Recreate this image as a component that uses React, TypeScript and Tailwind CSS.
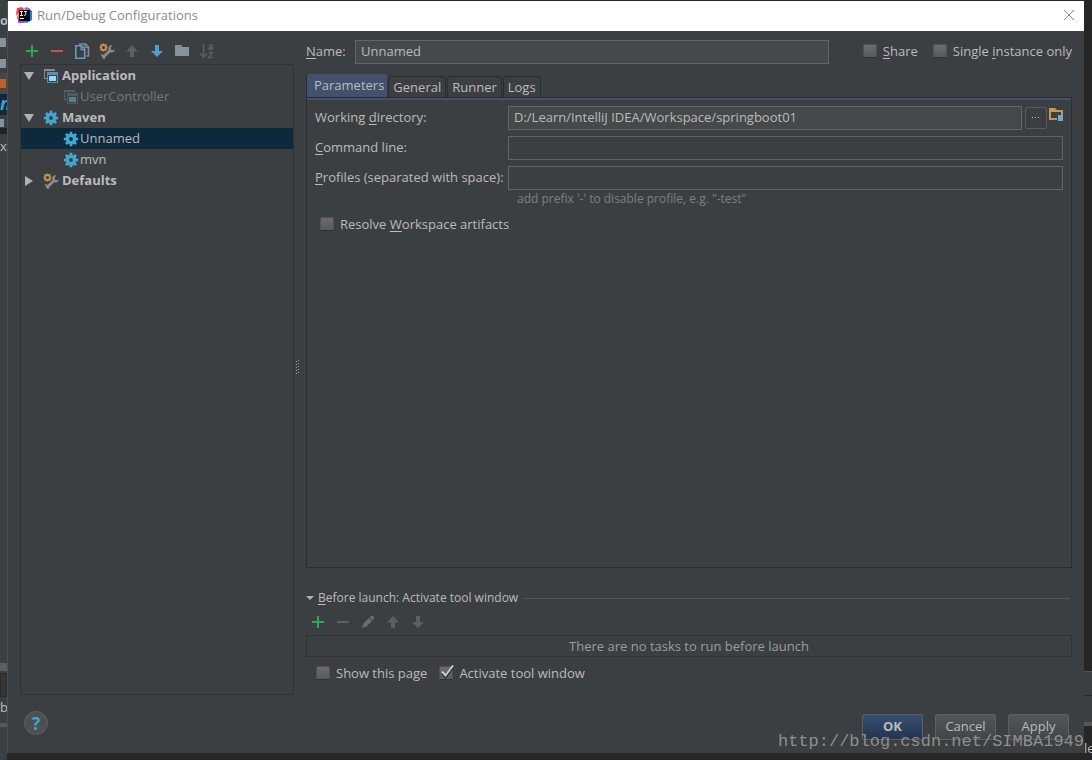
import React from 'react';

interface IconProps {
  className?: string;
}

const IdeaLogo = () => (
  <svg viewBox="0 0 16 16" className="w-4 h-4 shrink-0" aria-hidden="true">
    <path d="M1 1 L6 0 L9 3 L3 9 L0 7Z" fill="#fc3c5e" />
    <path d="M0 7 L4 6 L4 12 L1 11Z" fill="#f5a04a" />
    <path d="M1 10 L5 11 L10 16 L2 16 L2 13Z" fill="#c33bd4" />
    <path d="M9 1 L13 1 L16 4 L16 13 L11 16 L7 14 L12 8Z" fill="#1b7ff2" />
    <path d="M8 1 L11 0 L14 3 L12 6Z" fill="#8f6fe0" />
    <rect x="3" y="3" width="11" height="11" fill="#050505" />
    <path d="M4 4.5h3M5.5 4.5v4M4 8.5h3M8 4.5h3M9.8 4.5v2.8q0 1.2-1.9 1.1" stroke="#e8e8e8" strokeWidth="1" fill="none" />
    <rect x="4" y="11" width="4" height="1" fill="#fff" />
  </svg>
);

const PlusIcon = () => (
  <svg viewBox="0 0 16 16" className="w-4 h-4" aria-hidden="true">
    <path d="M7 2h2v5h5v2H9v5H7V9H2V7h5z" fill="#2fa84f" />
  </svg>
);

const MinusIcon = ({ className }: IconProps) => (
  <svg viewBox="0 0 16 16" className={`w-4 h-4 ${className}`} aria-hidden="true">
    <path d="M2 7h12v2H2z" fill="currentColor" />
  </svg>
);

const CopyIcon = () => (
  <svg viewBox="0 0 16 16" className="w-4 h-4" fill="none" aria-hidden="true">
    <path d="M5 1h6.500l3 3v9h-2" stroke="#8b8b8b" strokeWidth="1.6" />
    <path d="M11 1v3.500h3.500" stroke="#8b8b8b" strokeWidth="1.2" />
    <path d="M1.800 2.800h5.900l3 3v9.400H1.800z" stroke="#5f9dc4" strokeWidth="1.6" />
    <path d="M7.200 3v3.500h3.500" stroke="#5f9dc4" strokeWidth="1.4" />
  </svg>
);

const WrenchIcon = () => (
  <svg viewBox="0 0 16 16" className="w-4 h-4" fill="none" aria-hidden="true">
    <path d="M4 14.500l6.500-6.500" stroke="#8b8b8b" strokeWidth="3" />
    <path d="M13.500 2Q9.500 2 9.200 5.500T12.200 9.500 15.800 5.800L14 7.300 12 6.800 11.600 4.700z" fill="#8b8b8b" />
    <path d="M1.500 11.200l3 .3 1.800 4.200-2 .3z" fill="#8b8b8b" />
    <circle cx="4.500" cy="4.500" r="2.500" stroke="#c98f45" strokeWidth="1.800" />
    <path d="M4.500 .5V2M4.500 7v1.500M.5 4.500H2M7 4.500h1.500M1.500 1.500l1 1M6.500 6.500l1 1M1.500 7.500l1-1M6.500 2.500l1-1" stroke="#c98f45" strokeWidth="1.500" />
  </svg>
);

const ArrowUpIcon = () => (
  <svg viewBox="0 0 16 16" className="w-4 h-4 text-[#5c5e5f]" aria-hidden="true">
    <path d="M8 2l6 6.5h-4V14H6V8.5H2z" fill="currentColor" />
  </svg>
);

const ArrowDownIcon = ({ className }: IconProps) => (
  <svg viewBox="0 0 16 16" className={`w-4 h-4 ${className}`} aria-hidden="true">
    <path d="M8 14L2 8h4V2h4v6h4z" fill="currentColor" />
  </svg>
);

const FolderIcon = () => (
  <svg viewBox="0 0 16 16" className="w-4 h-4" aria-hidden="true">
    <path d="M1 2h6l1.5 2H15v9H1z" fill="#87939a" />
  </svg>
);

const SortIcon = () => (
  <svg viewBox="0 0 16 16" className="w-4 h-4" fill="none" stroke="#5c5e5f" aria-hidden="true">
    <path d="M4.500 1v13M1 10.500l3.500 3.500 3.500-3.500" strokeWidth="1.500" />
    <path d="M10 2.500q2-1.200 3.400.1v4M13.300 4.300h-2q-1.600.3-1.300 1.500.6 1 3.300-.3M9.800 9.500h3.700l-3.700 5h4" strokeWidth="1.500" />
  </svg>
);

const PencilIcon = () => (
  <svg viewBox="0 0 16 16" className="w-4 h-4" aria-hidden="true">
    <path d="M2 14l1.500-4.500L9 4l3 3-5.500 5.500zM9.500 3.500l2-1.700q1-.4 2 .6t.5 2l-1.500 2z" fill="#6a6c6d" />
  </svg>
);

const AppIcon = ({ className = '' }: IconProps) => (
  <svg viewBox="0 0 16 16" className={`w-4 h-4 shrink-0 ${className}`} aria-hidden="true">
    <path d="M1 1h11v2H2v8H1z" fill="#8b8b8b" />
    <path d="M2 10h2v1H2z" fill="#8b8b8b" />
    <path d="M4 4h11v11H4zM5 7v7h9V7z" fill="#4f93b8" fillRule="evenodd" />
    <rect x="6" y="8" width="7" height="5" fill="#9bd7f5" />
  </svg>
);

const toothAngles = [0, 45, 90, 135];

const GearIcon = () => (
  <svg viewBox="0 0 16 16" className="w-4 h-4 shrink-0" fill="none" stroke="#3fa7d0" aria-hidden="true">
    <circle cx="8" cy="8" r="3.700" strokeWidth="3.600" />
    {toothAngles.map((angle) => (
      <path key={angle} d="M8 .8v3M8 12.200v3" strokeWidth="2.600" transform={`rotate(${angle} 8 8)`} />
    ))}
  </svg>
);

const ModuleFolderIcon = () => (
  <svg viewBox="0 0 16 16" className="w-4 h-4" aria-hidden="true">
    <path d="M1 2h6l2 2h6v6h-2V6H3v6h6v2H1z" fill="#c4965a" />
    <rect x="10" y="9" width="5" height="6" fill="#6ba9d0" />
  </svg>
);

interface CheckOptionProps {
  id: string;
  checked?: boolean;
  children: React.ReactNode;
}

const CheckOption = ({ id, checked = false, children }: CheckOptionProps) => (
  <div className="flex items-center gap-1.5 whitespace-nowrap">
    <span className="relative flex">
      <input
        id={id}
        type="checkbox"
        defaultChecked={checked}
        className="peer appearance-none w-[14px] h-[14px] rounded-xs bg-linear-to-b from-[#6c6c6c] to-[#5a5a5a] border border-[#4f5152] border-b-[#303132]"
      />
      <svg viewBox="0 0 16 16" className="hidden peer-checked:block absolute -top-0.5 left-0 w-4 h-4 pointer-events-none" fill="none" aria-hidden="true">
        <path d="M3 8.500l3.500 4L14 2.500" stroke="#2c2c2c" strokeWidth="3" />
        <path d="M3 7.500l3.500 4L14 1.500" stroke="#cfcfcf" strokeWidth="2" />
      </svg>
    </span>
    <label htmlFor={id}>{children}</label>
  </div>
);

const Key = ({ children }: { children: string }) => (
  <span className="underline underline-offset-2">{children}</span>
);

const toolButton = 'w-[25px] h-6 flex items-center justify-center';
const field = 'h-6 min-w-0 border border-[#646464] px-[5px] pb-0.5 outline-none';

const ConfigTree = () => (
  <ul className="flex-1 border border-[#323232]">
    <li>
      <TreeRow icon={<AppIcon />} label="Application" arrow="open" />
      <ul>
        <TreeRow icon={<AppIcon className="opacity-40" />} label="UserController" muted />
      </ul>
    </li>
    <li>
      <TreeRow icon={<GearIcon />} label="Maven" arrow="open" />
      <ul>
        <TreeRow icon={<GearIcon />} label="Unnamed" selected />
        <TreeRow icon={<GearIcon />} label="mvn" />
      </ul>
    </li>
    <li>
      <TreeRow icon={<WrenchIcon />} label="Defaults" arrow="closed" />
    </li>
  </ul>
);

interface TreeRowProps {
  icon: React.ReactNode;
  label: string;
  arrow?: 'open' | 'closed';
  muted?: boolean;
  selected?: boolean;
}

const TreeRow = ({ icon, label, arrow, muted, selected }: TreeRowProps) => {
  if (!arrow) {
    return (
      <li className={`h-[21px] flex items-center pl-[42px] ${selected ? 'bg-[#0d293e]' : ''} ${muted ? 'text-[#777777]' : ''}`}>
        {icon}
        <span className="pl-px pb-0.5">{label}</span>
      </li>
    );
  }
  return (
    <div className="h-[21px] flex items-center pl-[3px] font-bold">
      <svg viewBox="0 0 10 10" className="w-2.5 h-2.5 mr-[9px] shrink-0" fill="#afb1b3" aria-hidden="true">
        {arrow === 'open' ? <path d="M0 1h10L5 9z" /> : <path d="M1 0l8 5-8 5z" />}
      </svg>
      {icon}
      <span className="pl-[3px] pb-0.5">{label}</span>
    </div>
  );
};

const tabs = ['General', 'Runner', 'Logs'];

const ParametersPanel = () => (
  <section className="flex-1 flex flex-col">
    <div role="tablist" className="flex items-end gap-px">
      <button role="tab" aria-selected="true" className="h-[23px] pl-[7px] pr-[3px] pb-0.5 rounded-t-xs border-l border-[#2c2e2f] bg-[#43516e]">
        Parameters
      </button>
      {tabs.map((tab) => (
        <button key={tab} role="tab" aria-selected="false" className="h-[21px] px-1 rounded-t-sm border border-b-0 border-[#2a2c2d]">
          {tab}
        </button>
      ))}
    </div>
    <div className="flex-1 border border-[#2a2c2d]">
      <div className="h-0.5 bg-[#43516e]" />
      <div className="px-2 pt-1.5">
        <div className="grid grid-cols-[193px_1fr] gap-y-1.5 items-center">
          <label htmlFor="workdir" className="pb-0.5">Working <Key>d</Key>irectory:</label>
          <div className="flex">
            <input id="workdir" defaultValue="D:/Learn/IntelliJ IDEA/Workspace/springboot01" className={`${field} flex-1 bg-[#45494a]`} />
            <button aria-label="Browse" className="ml-[3px] mt-px w-[22px] h-[22px] rounded-xs border border-[#5a5d5e] flex items-center justify-center">
              <svg viewBox="0 0 8 2" className="w-2 h-0.5" fill="#bbbbbb" aria-hidden="true">
                <path d="M0 0h1v1H0zM3 0h1v1H3zM6 0h1v1H6z" />
              </svg>
            </button>
            <button aria-label="Select module" className="self-start ml-px w-[15px]">
              <ModuleFolderIcon />
            </button>
          </div>
          <label htmlFor="cmdline" className="pb-0.5"><Key>C</Key>ommand line:</label>
          <input id="cmdline" className={field} />
          <label htmlFor="profiles" className="pb-0.5 whitespace-nowrap"><Key>P</Key>rofiles (separated with space):</label>
          <input id="profiles" className={field} />
        </div>
        <p className="pl-[202px] text-[12px] leading-[18px] text-[#7d7f80]">add prefix '-' to disable profile, e.g. "-test"</p>
        <div className="pt-1.5 pl-[5px]">
          <CheckOption id="resolve">Resolve <Key>W</Key>orkspace artifacts</CheckOption>
        </div>
      </div>
    </div>
  </section>
);

const BeforeLaunch = () => (
  <section className="pt-5">
    <h2 className="h-5 flex items-center text-[12px]">
      <svg viewBox="0 0 8 6" className="w-2 h-1.5 mr-1" fill="#afb1b3" aria-hidden="true">
        <path d="M0 1h8L4 5z" />
      </svg>
      <span><Key>B</Key>efore launch: Activate tool window</span>
      <span className="flex-1 h-px ml-1.5 mr-0.5 bg-[#515558]" />
    </h2>
    <div className="flex pt-0.5 pb-px -ml-px">
      <button aria-label="Add task" className={toolButton}><PlusIcon /></button>
      <button aria-label="Remove task" className={toolButton}><MinusIcon className="text-[#5c5e5f]" /></button>
      <button aria-label="Edit task" className={toolButton}><PencilIcon /></button>
      <button aria-label="Move task up" className={toolButton}><ArrowUpIcon /></button>
      <button aria-label="Move task down" className={toolButton}><ArrowDownIcon className="text-[#5c5e5f]" /></button>
    </div>
    <p className="h-[22px] border border-[#323232] flex items-center justify-center text-[#9a9c9d]">
      There are no tasks to run before launch
    </p>
    <div className="flex gap-3 pt-1.5 pb-px pl-2.5">
      <CheckOption id="showpage">Show this page</CheckOption>
      <CheckOption id="activate" checked>Activate tool window</CheckOption>
    </div>
  </section>
);

// Slivers of the editor window that show around the dialog
const LeftEdge = () => (
  <div className="w-[7px] shrink-0 overflow-hidden flex flex-col whitespace-nowrap" aria-hidden="true">
    <span className="h-[38px] pt-3 font-bold leading-4">or</span>
    <span className="h-[9px] w-1.5 bg-[#87939a]" />
    <span className="h-[9px] w-1.5 mt-3 bg-[#87939a]" />
    <span className="h-[21px] mt-[5px] py-1.5 bg-[#49473f]"><span className="block h-[9px] w-1.5 bg-[#c2602c]" /></span>
    <span className="h-[21px] bg-[#0d293e] text-[#3fa7d0] text-[18px] leading-[18px] font-bold italic">n</span>
    <span className="h-2 w-1 mt-1 bg-[#87939a]" />
    <span className="h-1.5 mt-px bg-[#222222]" />
    <span className="leading-5 mt-0.5">xt</span>
    <span className="h-2 mt-auto bg-[#5b5d5e]" />
    <span className="h-6 mt-0.5 border border-[#2a2a2a] bg-[#353638]" />
    <span className="h-[26px] leading-5">bu</span>
    <span className="h-1 bg-[#55585a]" />
    <span className="h-[33px]" />
  </div>
);

const RightEdge = () => (
  <div className="w-2 shrink-0 overflow-hidden flex flex-col justify-end bg-[#262626]" aria-hidden="true">
    <span className="h-6 border-t border-[#515558] bg-[#3c3f41]" />
    <span className="h-[27px] border-t border-[#2a2a2a] bg-[#3c3f41]" />
    <span className="h-1 bg-[#55585a]" />
    <span className="h-[34px] pt-3.5 leading-4 text-[#bbbbbb]">le</span>
  </div>
);

const footerButton = 'w-[61px] h-[26px] pb-0.5 rounded-xs border border-[#5c6062]';

export default function App() {
  return (
    <div className="relative min-h-screen flex bg-[#3c3f41] text-[#bbbbbb] text-[13px] leading-5 font-['Open_Sans',sans-serif]">
      <LeftEdge />
      <div className="flex-1 min-w-0 flex flex-col bg-[#262626]">
        <main className="flex-1 flex flex-col mt-px mb-[7px] border-l border-[#4c4f51] bg-[#3c3f41]">
          <header className="h-[30px] shrink-0 flex items-center pl-2 pr-[9px] pb-0.5 bg-white text-[#8c8c8c]">
            <IdeaLogo />
            <h1 className="flex-1 pl-[5px]">Run/Debug Configurations</h1>
            <button aria-label="Close">
              <svg viewBox="0 0 12 12" className="w-3 h-3" stroke="#8c8c8c" fill="none" aria-hidden="true">
                <path d="M1 1l10 10M11 1L1 11" />
              </svg>
            </button>
          </header>

          <div className="flex-1 flex pl-3 pr-3">
            <div className="w-[274px] shrink-0 flex flex-col pt-2">
              <div className="flex pb-px -ml-px">
                <button aria-label="Add" className={toolButton}><PlusIcon /></button>
                <button aria-label="Remove" className={toolButton}><MinusIcon className="text-[#c75450]" /></button>
                <button aria-label="Copy" className={toolButton}><CopyIcon /></button>
                <button aria-label="Edit defaults" className={toolButton}><WrenchIcon /></button>
                <button aria-label="Move up" className={toolButton}><ArrowUpIcon /></button>
                <button aria-label="Move down" className={toolButton}><ArrowDownIcon className="text-[#4a9fcb]" /></button>
                <button aria-label="New folder" className={toolButton}><FolderIcon /></button>
                <button aria-label="Sort" className={toolButton}><SortIcon /></button>
              </div>
              <ConfigTree />
            </div>

            <div className="w-3 shrink-0 flex items-center pl-0.5 pt-2">
              <svg viewBox="0 0 4 14" className="w-1 h-3.5" fill="#9a9c9d" aria-hidden="true">
                <path d="M0 1h1v1H0zM0 4h1v1H0zM0 7h1v1H0zM0 10h1v1H0zM0 13h1v1H0zM2 0h1v1H2zM2 3h1v1H2zM2 6h1v1H2zM2 9h1v1H2zM2 12h1v1H2z" />
              </svg>
            </div>

            <div className="flex-1 min-w-0 flex flex-col pt-[9px] pb-[11px]">
              <div className="flex items-center mb-2.5">
                <label htmlFor="name" className="w-[49px] pb-0.5"><Key>N</Key>ame:</label>
                <input id="name" defaultValue="Unnamed" className={`${field} flex-1 bg-[#45494a]`} />
                <div className="flex gap-[15px] pl-[34px] pb-0.5">
                  <CheckOption id="share"><Key>S</Key>hare</CheckOption>
                  <CheckOption id="single">Single <Key>i</Key>nstance only</CheckOption>
                </div>
              </div>
              <ParametersPanel />
              <BeforeLaunch />
            </div>
          </div>

          <footer className="h-[58px] shrink-0 flex items-center gap-3 pl-4 pb-0.5 pr-[15px]">
            <button className="w-6 h-6 mr-auto rounded-full border border-[#5c6062] bg-[#4c5052] text-[#4a9fcb] text-[18px] leading-5 font-bold">?</button>
            <button className={`${footerButton} mt-2 bg-linear-to-b from-[#365073] to-[#233450] font-bold`}>OK</button>
            <button className={`${footerButton} mt-2 bg-linear-to-b from-[#515658] to-[#414648]`}>Cancel</button>
            <button className={`${footerButton} mt-2 bg-linear-to-b from-[#515658] to-[#414648]`}>Apply</button>
          </footer>
        </main>
      </div>
      <RightEdge />
      <span className="absolute right-2 bottom-1.5 text-[17px] leading-6 text-[#8d8f8c] font-['Liberation_Mono',monospace] pointer-events-none">
        http://blog.csdn.net/SIMBA1949
      </span>
    </div>
  );
}
